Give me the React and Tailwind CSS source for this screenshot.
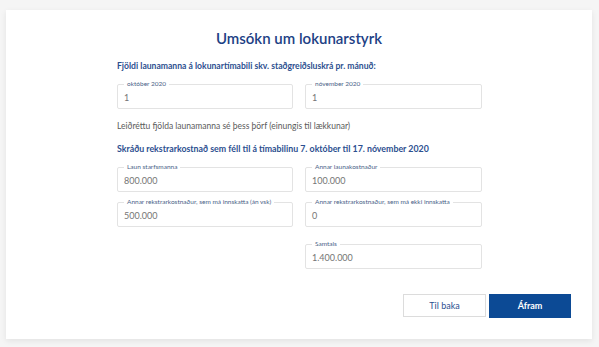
function Field({ label, value, className = '' }) {
  return (
    <div className={`relative border border-[#e3e3e3] rounded-[2px] h-[25px] px-[6px] flex items-center ${className}`}>
      <span className="absolute -top-[5px] left-[6px] bg-white px-[3px] text-[6.5px] leading-[8px] text-[#4a5f88] whitespace-nowrap">
        {label}
      </span>
      <span className="text-[9px] leading-[11px] text-[#757575] pt-[2px]">{value}</span>
    </div>
  )
}

function App() {
  return (
    <div className="min-h-screen bg-[#f5f5f5] pt-[10px] px-[6px] font-['Lato','Liberation_Sans',sans-serif]">
      <div className="bg-white w-[586px] h-[329px] shadow-[0_2px_6px_rgba(0,0,0,0.08)] flex flex-col">
        <h1 className="text-center text-[15px] leading-[22px] font-semibold text-[#1d4185] mt-[17px]">
          Umsókn um lokunarstyrk
        </h1>
        <div className="w-[365px] ml-[111px] mt-[11px]">
          <div className="text-[8.6px] font-bold text-[#2c4f8f] leading-[12px]">
            Fjöldi launamanna á lokunartímabili skv. staðgreiðsluskrá pr. mánuð:
          </div>
          <div className="grid grid-cols-[176px_177px] gap-x-[12px] mt-[12px]">
            <Field label="október 2020" value="1" />
            <Field label="nóvember 2020" value="1" />
          </div>
          <div className="text-[8.5px] text-[#5a5a5a] leading-[12px] mt-[11px]">
            Leiðréttu fjölda launamanna sé þess þörf (einungis til lækkunar)
          </div>
          <div className="text-[8.8px] font-bold text-[#2c4f8f] leading-[12px] mt-[11px]">
            Skráðu rekstrarkostnað sem féll til á tímabilinu 7. október til 17. nóvember 2020
          </div>
          <div className="grid grid-cols-[176px_177px] gap-x-[12px] gap-y-[10px] mt-[12px]">
            <Field label="Laun starfsmanna" value="800.000" />
            <Field label="Annar launakostnaður" value="100.000" />
            <Field label="Annar rekstrarkostnaður, sem má innskatta (án vsk)" value="500.000" />
            <Field label="Annar rekstrarkostnaður, sem má ekki innskatta" value="0" />
            <div />
            <Field label="Samtals" value="1.400.000" className="mt-[7px]" />
          </div>
        </div>
        <div className="flex justify-end gap-[3px] pr-[21px] mt-[25px]">
          <button className="w-[83px] h-[23px] border border-[#dcdcdc] bg-white text-[9px] text-[#2c4f8f]">
            Til baka
          </button>
          <button className="w-[82px] h-[24px] bg-[#0c4a95] text-white text-[9px] font-bold">
            Áfram
          </button>
        </div>
      </div>
    </div>
  )
}

export default App
